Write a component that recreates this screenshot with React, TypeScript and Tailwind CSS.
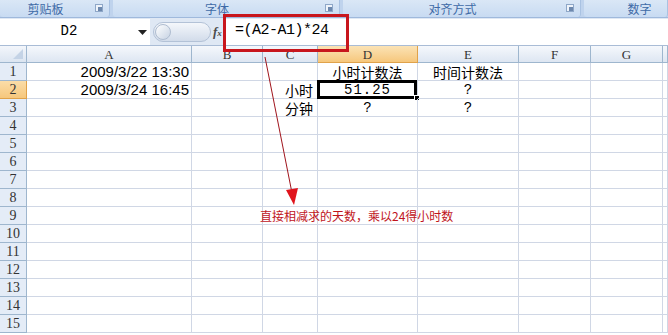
import React from 'react';

const cols = ['A', 'B', 'C', 'D', 'E', 'F', 'G', ''];
const rows = Array.from({ length: 15 }, (_, i) => i + 1);

const cellText: Record<string, { text: string; align: string; cls?: string }> = {
  'A1': { text: '2009/3/22 13:30', align: 'justify-end', cls: 'font-["Liberation_Sans",sans-serif] text-[15px] pr-0.5' },
  'A2': { text: '2009/3/24 16:45', align: 'justify-end', cls: 'font-["Liberation_Sans",sans-serif] text-[15px] pr-0.5' },
  'C2': { text: '小时', align: 'justify-end', cls: 'text-[14px] pr-1' },
  'C3': { text: '分钟', align: 'justify-end', cls: 'text-[14px] pr-1' },
  'D1': { text: '小时计数法', align: 'justify-center', cls: 'text-[14px]' },
  'E1': { text: '时间计数法', align: 'justify-center', cls: 'text-[14px]' },
  'D2': { text: '51.25', align: 'justify-center', cls: 'font-["Liberation_Mono",monospace] text-[14px] tracking-[1px]' },
  'D3': { text: '?', align: 'justify-center', cls: 'font-["Liberation_Mono",monospace] text-[14px]' },
  'E2': { text: '?', align: 'justify-center', cls: 'font-["Liberation_Mono",monospace] text-[14px]' },
  'E3': { text: '?', align: 'justify-center', cls: 'font-["Liberation_Mono",monospace] text-[14px]' },
};

function Launcher() {
  return (
    <span className="w-[8px] h-[8px] border border-[#8ea7c8] bg-[#eef3fa] flex items-end justify-end">
      <span className="w-[4px] h-[4px] bg-[#6d88ad]" />
    </span>
  );
}

function RibbonGroup({ label, width, launcher = true }: { label: string; width: string; launcher?: boolean }) {
  return (
    <div className={`${width} h-full flex items-center relative rounded-b-[3px] bg-gradient-to-b from-[#dae7f6] to-[#c8dbf2] border-r border-[#a9c2e2]`}>
      <span className={`flex-1 text-center text-[12px] text-[#3e6aa6] leading-none ${launcher ? 'pr-[18px]' : 'pl-[28px]'}`}>{label}</span>
      {launcher && (
        <span className="absolute right-[6px] top-[4px]">
          <Launcher />
        </span>
      )}
    </div>
  );
}

export default function App() {
  return (
    <div className="relative w-[668px] h-[335px] overflow-hidden bg-white font-['Noto_Sans_CJK_SC',sans-serif] text-black">
      {/* ribbon group labels */}
      <div className="h-[18px] flex gap-[3px] bg-[#bfd3ed] border-b border-[#9fb9dc]">
        <RibbonGroup label="剪贴板" width="w-[110px]" />
        <RibbonGroup label="字体" width="w-[227px]" />
        <RibbonGroup label="对齐方式" width="w-[238px]" />
        <RibbonGroup label="数字" width="flex-1" launcher={false} />
      </div>

      {/* formula bar */}
      <div className="h-[28px] flex items-center bg-[#dfe8f4] border-b border-[#a9bcd6]">
        <div className="w-[150px] h-[26px] bg-white flex items-center relative">
          <span className="flex-1 text-center text-[14px] font-['Liberation_Mono',monospace] pr-3">D2</span>
          <svg width="9" height="6" className="absolute right-[3px] top-[11px]">
            <path d="M0 0 L9 0 L4.5 5 Z" fill="#222" />
          </svg>
        </div>
        <div className="w-[76px] h-[24px] flex items-center">
          <div className="ml-[3px] w-[58px] h-[20px] rounded-full bg-gradient-to-b from-[#f4f7fb] to-[#d2dcea] border border-[#b3c2d7] flex items-center">
            <span className="ml-[1px] w-[16px] h-[16px] rounded-full bg-gradient-to-br from-white to-[#c7d3e3] border border-[#aebcd0]" />
          </div>
          <span className="ml-[2px] font-['Liberation_Serif',serif] italic font-bold text-[13px] text-[#4b4b4b]">
            f<span className="text-[9px]">x</span>
          </span>
        </div>
        <div className="flex-1 h-[26px] bg-white flex items-center pl-[9px] text-[15px] font-['Liberation_Mono',monospace] tracking-[-0.5px]">
          =(A2-A1)*24
        </div>
      </div>

      {/* sheet grid */}
      <div className="grid grid-cols-[27px_165px_71px_55px_100px_101px_72px_72px_5px] grid-rows-[17px_repeat(15,18px)]">
        <div className="border-r border-b border-[#9eb6ce] bg-gradient-to-b from-[#f3f6fb] to-[#dbe5f1] relative">
          <svg width="10" height="10" className="absolute right-[3px] bottom-[3px]">
            <path d="M10 0 L10 10 L0 10 Z" fill="#c4d3e6" />
          </svg>
        </div>
        {cols.map((c, i) => (
          <div
            key={c + i}
            className={`flex items-center justify-center text-[13px] border-r border-b leading-none ${
              c === 'D'
                ? 'bg-gradient-to-b from-[#fbe3b5] to-[#f6c77c] border-[#e0a24a] text-[#333]'
                : 'bg-gradient-to-b from-[#f5f8fc] to-[#dde6f2] border-[#9eb6ce] text-[#333]'
            } font-['Liberation_Serif',serif]`}
          >
            {c}
          </div>
        ))}
        {rows.map((r) => (
          <React.Fragment key={r}>
            <div
              className={`flex items-center justify-center text-[14px] leading-none border-r border-b font-['Liberation_Serif',serif] text-[#333] ${
                r === 2
                  ? 'bg-gradient-to-b from-[#fbdda8] to-[#f6c77c] border-[#e0a24a]'
                  : 'bg-[#e4ecf7] border-[#9eb6ce]'
              }`}
            >
              {r}
            </div>
            {cols.map((c, i) => {
              const key = c + r;
              const data = cellText[key];
              return (
                <div
                  key={key + i}
                  className={`relative flex items-center leading-none border-r border-b border-[#d0d7e5] whitespace-nowrap ${data ? data.align : ''} ${data?.cls ?? ''}`}
                >
                  {data?.text}
                  {key === 'D2' && (
                    <>
                      <span className="absolute -left-[1px] -top-[1px] w-[100px] h-[19px] border-[3px] border-black" />
                      <span className="absolute -right-[3px] -bottom-[3px] w-[6px] h-[6px] bg-black border border-white" />
                    </>
                  )}
                </div>
              );
            })}
          </React.Fragment>
        ))}
      </div>

      {/* annotation overlays */}
      <span className="absolute left-[223px] top-[14px] w-[126px] h-[38px] border-[3px] border-[#c8161d]" />
      <svg className="absolute left-0 top-0" width="668" height="335">
        <line x1="265" y1="57" x2="292" y2="193" stroke="#a0141c" strokeWidth="1" />
        <path d="M286 190 L298 188 L294 205 Z" fill="#e0141c" />
      </svg>
      <span className="absolute left-[260px] top-[210px] text-[12px] leading-none text-[#c0141c] whitespace-nowrap">
        直接相减求的天数，乘以24得小时数
      </span>
    </div>
  );
}
